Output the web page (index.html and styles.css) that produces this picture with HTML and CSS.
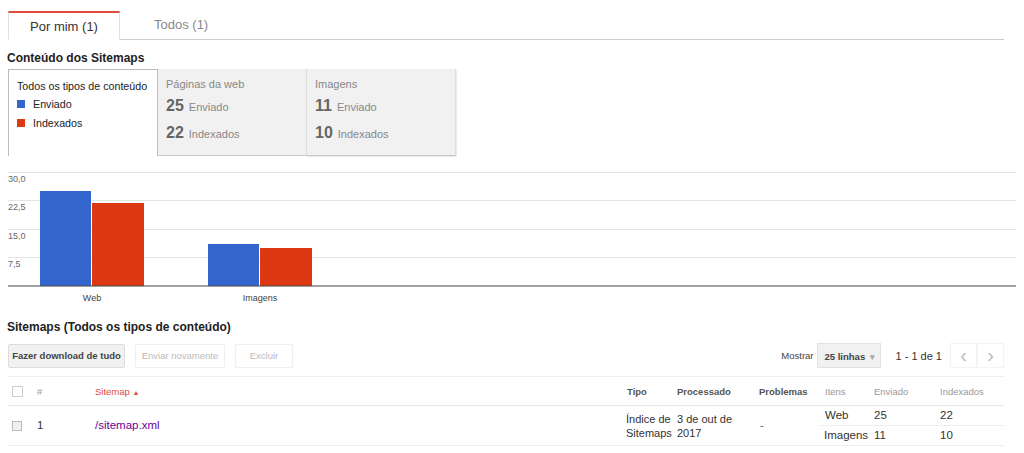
FILE: index.html
```html
<!DOCTYPE html>
<html lang="pt">
<head>
<meta charset="utf-8">
<link rel="stylesheet" href="styles.css">
</head>
<body>
<div class="page">
  <div class="tabs">
    <div class="tab active">Por mim (1)</div>
    <div class="tab">Todos (1)</div>
    <div class="tab-fill"></div>
  </div>

  <h2 class="section-title">Conteúdo dos Sitemaps</h2>

  <div class="types">
    <div class="type-panel selected">
      <div class="type-name">Todos os tipos de conteúdo</div>
      <div class="legend"><span class="sq blue"></span>Enviado</div>
      <div class="legend"><span class="sq red"></span>Indexados</div>
    </div>
    <div class="type-panel">
      <div class="type-name muted">Páginas da web</div>
      <div class="stat"><b>25</b>Enviado</div>
      <div class="stat"><b>22</b>Indexados</div>
    </div>
    <div class="type-panel last">
      <div class="type-name muted">Imagens</div>
      <div class="stat"><b>11</b>Enviado</div>
      <div class="stat"><b>10</b>Indexados</div>
    </div>
  </div>

  <svg class="chart" width="1016" height="146" viewBox="0 0 1016 146">
    <g stroke="#e4e4e4" stroke-width="1">
      <line x1="0" y1="11.5" x2="1008" y2="11.5"/>
      <line x1="0" y1="39.5" x2="1008" y2="39.5"/>
      <line x1="0" y1="68.5" x2="1008" y2="68.5"/>
      <line x1="0" y1="96.5" x2="1008" y2="96.5"/>
    </g>
    <g fill="#666" font-size="9" font-family="Liberation Sans, Arial, sans-serif">
      <text x="0" y="21">30,0</text>
      <text x="0" y="49">22,5</text>
      <text x="0" y="78">15,0</text>
      <text x="0" y="106">7,5</text>
    </g>
    <rect x="32" y="30" width="51" height="95" fill="#3366cc"/>
    <rect x="84" y="42" width="52" height="83" fill="#dc3912"/>
    <rect x="200" y="83" width="51" height="42" fill="#3366cc"/>
    <rect x="252" y="87" width="52" height="38" fill="#dc3912"/>
    <line x1="0" y1="125" x2="1008" y2="125" stroke="#444" stroke-width="1.2"/>
    <g fill="#444" font-size="9" font-family="Liberation Sans, Arial, sans-serif" text-anchor="middle">
      <text x="84" y="140">Web</text>
      <text x="252" y="140">Imagens</text>
    </g>
  </svg>

  <h2 class="section-title second">Sitemaps (Todos os tipos de conteúdo)</h2>

  <div class="toolbar">
    <button class="btn main">Fazer download de tudo</button>
    <button class="btn disabled">Enviar novamente</button>
    <button class="btn disabled small">Excluir</button>
    <div class="spacer"></div>
    <span class="show-label">Mostrar</span>
    <span class="select">25 linhas <span class="caret">▾</span></span>
    <span class="range">1 - 1 de 1</span>
    <span class="pager">&#8249;</span>
    <span class="pager">&#8250;</span>
  </div>

  <table class="grid">
    <colgroup>
      <col style="width:24px">
      <col style="width:58px">
      <col style="width:532px">
      <col style="width:50px">
      <col style="width:82px">
      <col style="width:66px">
      <col style="width:49px">
      <col style="width:66px">
      <col style="width:69px">
    </colgroup>
    <thead>
      <tr>
        <th><span class="cb"></span></th>
        <th class="light">#</th>
        <th class="sort">Sitemap <span class="arrow">▲</span></th>
        <th>Tipo</th>
        <th>Processado</th>
        <th>Problemas</th>
        <th class="light">Itens</th>
        <th class="light">Enviado</th>
        <th class="light">Indexados</th>
      </tr>
    </thead>
    <tbody>
      <tr class="sub first">
        <td rowspan="2"><span class="cb small"></span></td>
        <td rowspan="2">1</td>
        <td rowspan="2"><a class="link" href="#">/sitemap.xml</a></td>
        <td rowspan="2" class="wrap tipo">Índice de Sitemaps</td>
        <td rowspan="2" class="wrap">3 de out de 2017</td>
        <td rowspan="2" class="dash">-</td>
        <td>Web</td>
        <td>25</td>
        <td>22</td>
      </tr>
      <tr class="sub">
        <td>Imagens</td>
        <td>11</td>
        <td>10</td>
      </tr>
    </tbody>
  </table>
</div>
</body>
</html>
```

FILE: styles.css
```css
* { box-sizing: border-box; }
body {
  margin: 0;
  background: #fff;
  font-family: "Liberation Sans", Arial, sans-serif;
  color: #333;
}
.page {
  padding: 11px 20px 0 8px;
}
.tabs {
  display: flex;
  height: 29px;
}
.tab {
  font-size: 13px;
  line-height: 27px;
  color: #888;
  padding: 0 34px;
  border-bottom: 1px solid #ccc;
}
.tab.active {
  width: 112px;
  padding: 0;
  text-align: center;
  color: #333;
  border-top: 2px solid #dd4b39;
  border-left: 1px solid #e0e0e0;
  border-right: 1px solid #e0e0e0;
  border-bottom: 1px solid #fff;
}
.tab-fill {
  flex: 1;
  border-bottom: 1px solid #ccc;
}
.section-title {
  margin: 0;
  font-size: 12px;
  font-weight: bold;
  color: #222;
  padding: 11px 0 0 0;
  line-height: 14px;
  margin-left: -1px;
}
.section-title.second {
  padding: 13px 0 0 0;
}
.types {
  display: flex;
  margin-top: 4px;
  height: 87px;
}
.type-panel {
  width: 149px;
  background: #f1f1f1;
  border-left: 1px solid #ddd;
  border-bottom: 1px solid #c8c8c8;
  padding: 8px 8px 0 8px;
  font-size: 11px;
}
.type-panel.selected {
  background: #fff;
  border: 1px solid #bbb;
  border-bottom: none;
  border-right: none;
  padding: 9px 0 0 8px;
  color: #222;
  font-size: 10.7px;
}
.type-panel.last {
  width: 150px;
  border-right: 1px solid #ddd;
  box-shadow: 1px 1px 1px rgba(0,0,0,0.08);
}
.type-panel + .type-panel { border-left: 1px solid #bbb; }
.type-panel.last { border-left: 1px solid #ddd; }
.type-name { line-height: 14px; }
.type-name.muted { color: #888; }
.legend {
  display: flex;
  align-items: center;
  margin-top: 4px;
  line-height: 14px;
}
.legend + .legend { margin-top: 5px; }
.sq {
  width: 8px;
  height: 8px;
  margin-right: 8px;
  display: inline-block;
}
.sq.blue { background: #3366cc; }
.sq.red { background: #dc3912; }
.stat {
  color: #888;
  margin-top: 6px;
  line-height: 18px;
}
.stat + .stat { margin-top: 8px; }
.stat b {
  font-size: 16px;
  color: #666;
  margin-right: 5px;
}
.chart {
  display: block;
  margin-top: 5px;
}
.toolbar {
  display: flex;
  align-items: center;
  margin-top: 9px;
  height: 25px;
  font-size: 9.5px;
}
.btn {
  height: 24px;
  font: bold 9.5px "Liberation Sans", Arial, sans-serif;
  color: #444;
  background: #f1f1f1;
  border: 1px solid #dcdcdc;
  border-radius: 2px;
  padding: 0;
  margin-right: 10px;
  white-space: nowrap;
}
.btn.main { width: 117px; }
.btn.disabled {
  background: #fff;
  color: #bbb;
  font-weight: normal;
  border-color: #eee;
  width: 90px;
}
.btn.small { width: 58px; }
.spacer { flex: 1; }
.show-label { color: #444; margin-right: 3px; }
.select {
  width: 64px;
  height: 25px;
  line-height: 25px;
  background: #f1f1f1;
  border: 1px solid #e2e2e2;
  padding: 0 0 0 7px;
  font-weight: bold;
  color: #444;
  white-space: nowrap;
}
.caret { color: #aaa; font-size: 9px; margin-left: 2px; }
.range {
  font-size: 11px;
  color: #333;
  margin-left: 15px;
  margin-right: 8px;
}
.pager {
  width: 27px;
  height: 25px;
  line-height: 22px;
  text-align: center;
  font-size: 20px;
  color: #bbb;
  border: 1px solid #f3f3f3;
}
.grid {
  margin-top: 8px;
  width: 996px;
  border-collapse: collapse;
  table-layout: fixed;
  font-size: 11px;
}
.grid th {
  height: 29px;
  text-align: left;
  font-size: 9.5px;
  font-weight: bold;
  color: #555;
  padding: 0 0 0 5px;
  border-top: 1px solid #eee;
  border-bottom: 1px solid #e8e8e8;
}
.grid th:first-child, .grid td:first-child { padding-left: 4px; }
.grid th.light { font-weight: normal; color: #999; }
.grid th.sort { color: #dd4b39; font-weight: normal; }
.arrow { font-size: 7px; }
.grid td {
  padding: 0 0 0 5px;
  color: #333;
  vertical-align: middle;
  border-bottom: 1px solid #eee;
  height: 20px;
  line-height: 13px;
  font-size: 11.5px;
}
.grid td.wrap { line-height: 14px; font-size: 11px; }
.grid td.tipo { padding-left: 4px; padding-right: 0; white-space: normal; }
.grid td.dash { color: #666; padding-left: 6px; }
.cb {
  display: inline-block;
  width: 11px;
  height: 11px;
  border: 1px solid #ccc;
  vertical-align: middle;
}
.cb.small {
  width: 10px;
  height: 10px;
  background: #f0f0f0;
  border-color: #bbb;
}
.link { color: #660099; text-decoration: none; }
```
